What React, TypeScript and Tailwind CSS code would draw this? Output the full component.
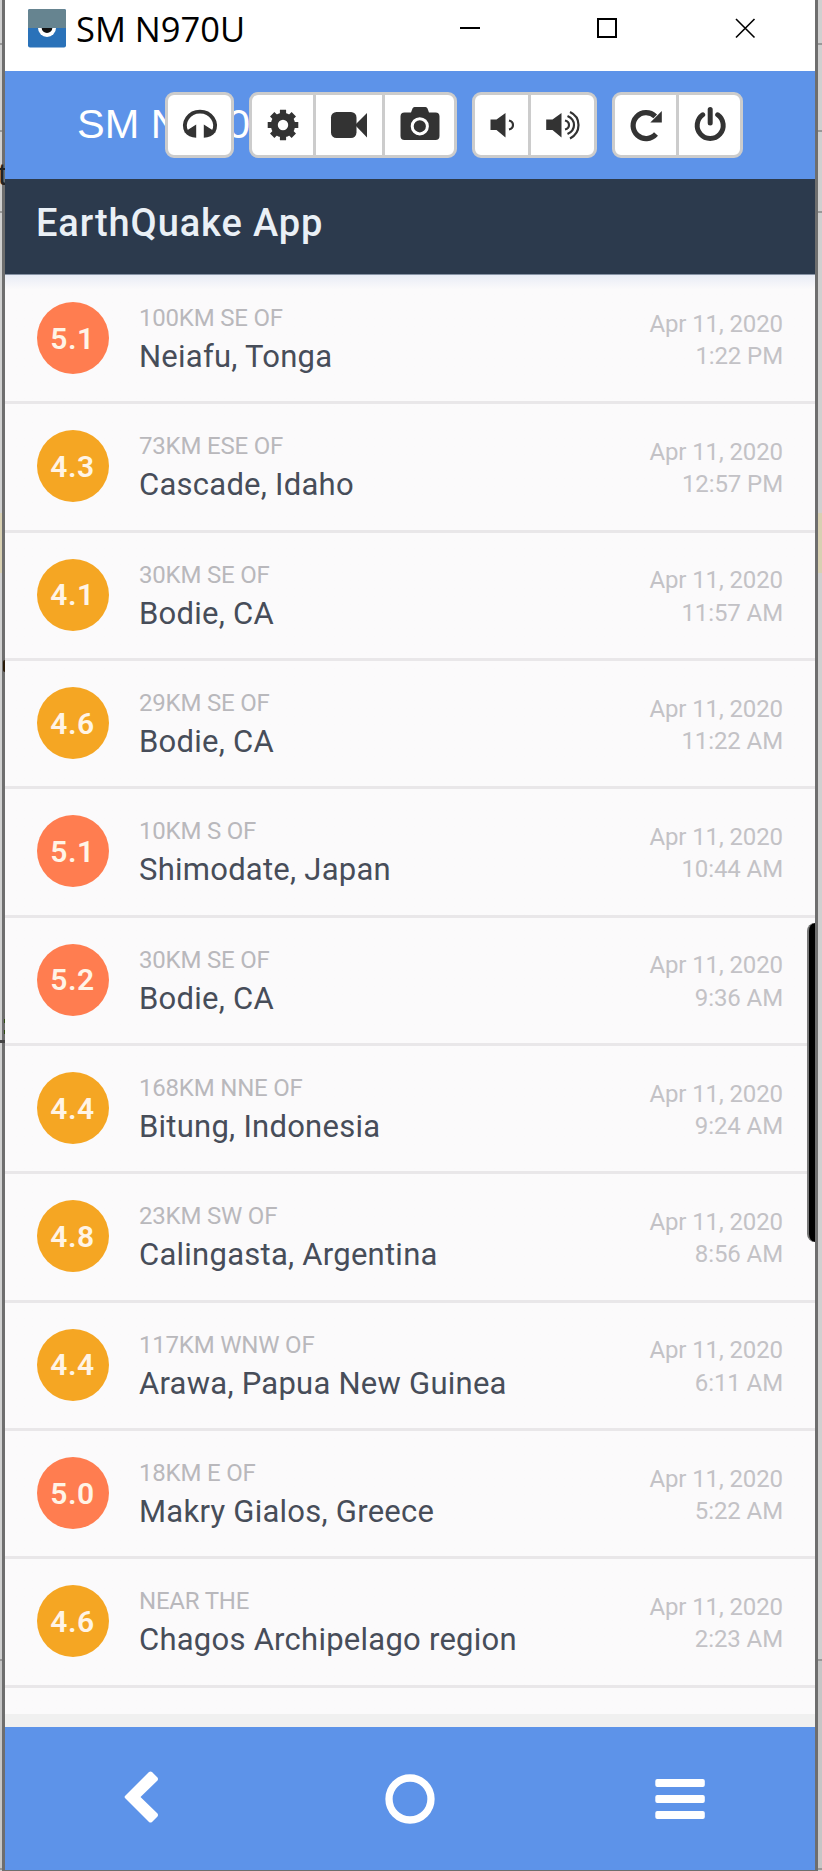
import React from "react";

const quakes = [
  ["5.1", "100KM SE OF", "Neiafu, Tonga", "1:22 PM"],
  ["4.3", "73KM ESE OF", "Cascade, Idaho", "12:57 PM"],
  ["4.1", "30KM SE OF", "Bodie, CA", "11:57 AM"],
  ["4.6", "29KM SE OF", "Bodie, CA", "11:22 AM"],
  ["5.1", "10KM S OF", "Shimodate, Japan", "10:44 AM"],
  ["5.2", "30KM SE OF", "Bodie, CA", "9:36 AM"],
  ["4.4", "168KM NNE OF", "Bitung, Indonesia", "9:24 AM"],
  ["4.8", "23KM SW OF", "Calingasta, Argentina", "8:56 AM"],
  ["4.4", "117KM WNW OF", "Arawa, Papua New Guinea", "6:11 AM"],
  ["5.0", "18KM E OF", "Makry Gialos, Greece", "5:22 AM"],
  ["4.6", "NEAR THE", "Chagos Archipelago region", "2:23 AM"],
];

function Group({ className, children }: { className: string; children: React.ReactNode }) {
  return (
    <div className={`flex h-[66px] shrink-0 divide-x-[3px] divide-[#ccc] overflow-hidden rounded-[9px] border-[3px] border-[#ccc] bg-white ${className}`}>
      {children}
    </div>
  );
}

function Tool({ box, label, className, children }: { box: string; label: string; className: string; children: React.ReactNode }) {
  return (
    <button aria-label={label} className={`flex h-full shrink-0 items-center justify-center ${className}`}>
      <svg viewBox={box} className="h-[40px] w-[42px] shrink-0" fill="#333" stroke="none">
        {children}
      </svg>
    </button>
  );
}

function Quake({ q }: { q: string[] }) {
  const strong = q[0].startsWith("5");
  return (
    <li className="flex h-[128.35px] border-b-[3px] border-[#e9e7e9] pr-[32px] pl-[31.5px]">
      <div className={`mt-[26px] flex size-[72px] shrink-0 items-center justify-center rounded-full text-[30px] font-semibold tracking-[0.6px] text-[#fff4e6] ${strong ? "bg-[#ff7d50]" : "bg-[#f5a623]"}`}>
        {q[0]}
      </div>
      <div className="ml-[30.500px] flex-1 whitespace-nowrap">
        <div className="mt-[26px] h-[32px] text-[24px] leading-[32px] text-[#b9b8bc]">{q[1]}</div>
        <div className="h-[44px] text-[31px] leading-[45px] tracking-[0.25px] text-[#474d59]">{q[2]}</div>
      </div>
      <div className="mt-[31.500px] text-right text-[24px] leading-[32.5px] tracking-[-0.1px] whitespace-nowrap text-[#c3c2c6]">
        <div>Apr 11, 2020</div>
        <div>{q[3]}</div>
      </div>
    </li>
  );
}

/* Sliver of the spreadsheet that shows on either side of the window. */
function Backdrop({ className }: { className: string }) {
  return (
    <div className={`flex shrink-0 flex-col bg-[#d0d0d0] ${className}`}>
      <div className="h-[45px] shrink-0 border-b-2 border-[#999]" />
      <div className="h-[87px] shrink-0 border-b-2 border-[#999]" />
      <div className="h-[81px] shrink-0 border-b-2 border-[#999]" />
      <div className="mt-[300px] h-[60px] shrink-0 bg-[#d8d0b2]" />
      <div className="h-[1088px] shrink-0 border-b-2 border-[#999]" />
      <div className="h-[209px] shrink-0 border-b-2 border-[#999] bg-[#c6c6c6]" />
    </div>
  );
}

export default function App() {
  return (
    <div className="relative flex h-[1871px] w-[822px] overflow-hidden font-[Roboto,sans-serif]">
      <Backdrop className="w-[2px]" />
      <div className="relative flex h-[1871px] w-[816px] shrink-0 flex-col border-x-[3px] border-b border-[#6e6e6e] bg-[#fafafa]">
        <header className="flex h-[71px] shrink-0 items-center bg-white">
          <svg viewBox="28 9 38 39" className="mt-[-14px] ml-[23px] h-[39px] w-[38px]">
            <rect x="28" y="9" width="38" height="38.5" rx="2" fill="#2a72b9" />
            <path d="M28 28V11a2 2 0 0 1 2-2h34a2 2 0 0 1 2 2v17z" fill="#668490" />
            <path d="M38 28h18a9 9 0 0 1-18 0z" fill="#fff" />
            <path d="M41.700 28h10.600a5.300 5 0 0 1-10.600 0z" fill="#111" />
          </svg>
          <span className="mt-[-14px] ml-[10px] w-[340px] font-['Open_Sans',sans-serif] text-[35px] leading-[50px] text-black">
            <span className="inline-block origin-left scale-x-[0.985]">SM N970U</span>
          </span>
          <svg viewBox="455 13 310 30" className="mt-[-15px] ml-[39px] h-[30px] w-[310px]" fill="none" stroke="#000" strokeWidth="2">
            <path d="M460 28h20M598 19h18v18h-18z" />
            <path d="M736 19l18.500 18.500M754.500 19l-18.500 18.500" strokeWidth="1.600" />
          </svg>
        </header>

        <div className="relative flex h-[108px] shrink-0 items-start bg-[#5d93e9] pt-[21px] pl-[160px]">
          <div className="absolute top-[30px] left-[72px] font-['Liberation_Sans',Arial,sans-serif] text-[41.500px] leading-[46px] whitespace-nowrap text-white">SM N970</div>
          <div className="relative flex">
            <Group className="w-[69px]">
              <Tool label="Audio" className="w-[63px]" box="178.500 105 42 40">
                <path d="M186 131.700a15 14 0 1 1 27 0" fill="none" stroke="#333" strokeWidth="3.800" />
                <path d="M184 132l11.700-7.500v13.200c-5 0-9-2-11.700-5.700zM215 132l-11.700-7.500v13.200c5 0 9-2 11.700-5.700z" />
              </Tool>
            </Group>
            <Group className="ml-[15px] w-[208px]">
              <Tool label="Settings" className="w-[64px]" box="261.700 105 42 40">
                <circle cx="282.700" cy="125" r="8.700" fill="none" stroke="#333" strokeWidth="7" />
                <path d="M282.700 109.700v6M282.700 134.300v6M267.400 125h6M292 125h6M271.900 114.200l4 4M289.500 131.800l4 4M271.900 135.800l4-4M289.500 118.200l4-4" stroke="#333" strokeWidth="6.200" />
              </Tool>
              <Tool label="Record" className="w-[69px]" box="328 105 42 40">
                <rect x="331" y="112" width="25.500" height="26" rx="5.500" />
                <path d="M355 125l12-12v24.500z" />
              </Tool>
              <Tool label="Screenshot" className="w-[69px]" box="398.500 105 42 40">
                <path d="M404 112.500h6.500l1.500-4q.5-1.500 2-1.500h11q1.500 0 2 1.500l1.500 4h6.500q4 0 4 4V136q0 4-4 4h-31q-4 0-4-4v-19.500q0-4 4-4z" />
                <circle cx="419.300" cy="126.300" r="7.600" stroke="#fff" strokeWidth="3" />
              </Tool>
            </Group>
            <Group className="ml-[15px] w-[125px]">
              <Tool label="Volume down" className="w-[56px]" box="480.500 105 42 40">
                <path d="M490 119.500h6l9-6.500v24.500l-9-7.500h-6z" />
                <path d="M508.500 120.500q4 1 4 4.500t-4 4.500" fill="none" stroke="#333" strokeWidth="2.200" />
              </Tool>
              <Tool label="Volume up" className="w-[63px]" box="541.500 105 42 40">
                <path d="M545.700 119.500h6.300l9-6.500v24.500l-9-7.500h-6.300z" />
                <path d="M564.500 120.500q4 1 4 4.500t-4 4.500M567 116q6.500 3 6.500 9t-6.500 9M569.500 112q8.500 4 8.500 13t-8.500 13.500" fill="none" stroke="#333" strokeWidth="2.200" />
              </Tool>
            </Group>
            <Group className="ml-[15px] w-[131px]">
              <Tool label="Rotate" className="w-[64px]" box="624.500 105 42 40">
                <path d="M655.500 134a13 13 0 1 1-.8-17.700" fill="none" stroke="#333" strokeWidth="5.200" />
                <path d="M661.300 111v11.500h-11.500z" />
              </Tool>
              <Tool label="Power" className="w-[61px]" box="688.500 105 42 40">
                <path d="M702.200 114.800a13 13 0 1 0 15 0" fill="none" stroke="#333" strokeWidth="5" strokeLinecap="round" />
                <path d="M709.700 109.500v13.500" stroke="#333" strokeWidth="5" strokeLinecap="round" />
              </Tool>
            </Group>
          </div>
        </div>

        <div className="flex h-[96px] shrink-0 items-center border-b border-[#8793a5] bg-[#2c3a4d] pb-[7px] pl-[31px] text-[38px] font-medium tracking-[0.9px] text-[#eaf0f6]">EarthQuake App</div>
        <ul className="h-[1439px] shrink-0 bg-gradient-to-b from-[#e9ecf6] to-[#fbfafb] to-[1%] pt-px tracking-[-0.2px]">
          {quakes.map((q, i) => <Quake key={i} q={q} />)}
        </ul>
        <div className="h-[13px] shrink-0 bg-[#f0f0f0]" />

        <nav className="flex h-[143px] shrink-0 items-center bg-[#5d93e9]">
          <svg viewBox="5 1727 810 143" className="h-[143px] w-[810px]" fill="#fff">
            <path d="M125 1796l24-24q1.500-1 3 0l5.500 5.500q1 1.500 0 3L140.500 1797l17 16.500q1 1.500 0 3l-5.500 5.500q-1.500 1-3 0l-24-24q-.8-1 0-2z" />
            <circle cx="410" cy="1799" r="21" fill="none" stroke="#fff" strokeWidth="7.300" />
            <path d="M657.300 1779h45.500a2 2 0 0 1 2 2v4a2 2 0 0 1-2 2h-45.500a2 2 0 0 1-2-2v-4a2 2 0 0 1 2-2zM657.300 1795h45.500a2 2 0 0 1 2 2v4a2 2 0 0 1-2 2h-45.500a2 2 0 0 1-2-2v-4a2 2 0 0 1 2-2zM657.300 1811h45.500a2 2 0 0 1 2 2v4a2 2 0 0 1-2 2h-45.500a2 2 0 0 1-2-2v-4a2 2 0 0 1 2-2z" />
          </svg>
        </nav>
        <div className="absolute top-[923px] right-0 h-[319px] w-[8.500px] rounded-l-[8px] border-l-2 border-[#777] bg-black" />
      </div>
      <Backdrop className="w-[4px]" />
      <div className="absolute top-[154px] left-0 h-[40px] w-[5px] overflow-hidden">
        <span className="-ml-[2px] block font-['Liberation_Sans',Arial,sans-serif] text-[32px] leading-[40px] text-[#222]">t</span>
      </div>
      <div className="absolute top-[660px] left-[3px] h-[12px] w-[2px] rounded-l-full bg-[#2a1a08]" />
      <div className="absolute top-[1040px] left-0 h-[3px] w-[5px] bg-[#444]" />
      <div className="absolute top-[1019px] left-[4px] h-[15px] w-px border-y-4 border-[#2c4a10]" />
    </div>
  );
}
